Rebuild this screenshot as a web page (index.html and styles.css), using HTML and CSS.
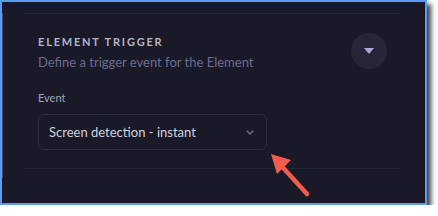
FILE: index.html
```html
<!DOCTYPE html>
<html>
    <head>
        <meta http-equiv='Content-Type' content='text/html; charset=UTF-8'>
        <title>Element Trigger</title>
        <link rel="stylesheet" href="styles.css">
    </head>
    <body>
        <div class='frame'>
            <div class='section'>
                <div class='header'>
                    <div class='heading'>
                        <div class='title'>ELEMENT TRIGGER</div>
                        <div class='subtitle'>Define a trigger event for the Element</div>
                    </div>
                    <button class='toggle'>
                        <svg width='10' height='6' viewBox='0 0 10 6'><polygon points='0,0 10,0 5,6' fill='#aaaad4'/></svg>
                    </button>
                </div>
                <div class='label'>Event</div>
                <div class='select'>
                    <span>Screen detection - instant</span>
                    <svg width='8' height='5' viewBox='0 0 8 5'><polyline points='1,1 4,4 7,1' fill='none' stroke='#6c6c8c' stroke-width='1.4' stroke-linecap='round'/></svg>
                </div>
            </div>
            <svg class='arrow' width='60' height='60' viewBox='0 0 60 60'>
                <line x1='41' y1='46' x2='11' y2='13' stroke='#f25c4c' stroke-width='4.5' stroke-linecap='round'/>
                <polygon points='5,6 25,12 11,26' fill='#f25c4c'/>
            </svg>
        </div>
    </body>
</html>
```

FILE: styles.css
```css
body {
    margin: 0;
    background: #ffffff;
    font-family: Lato, "Noto Sans", sans-serif;
}
.frame {
    position: relative;
    width: 423px;
    height: 201px;
    background: #191927;
    border: 2px solid #5b9bf2;
    box-shadow: 4px 4px 5px rgba(0, 0, 0, 0.75);
}
.frame::before {
    content: '';
    position: absolute;
    left: 0;
    top: 11px;
    width: 1px;
    height: 165px;
    background: #4b4b60;
}
.section {
    margin: 11px 0 0 21px;
    width: 378px;
    border-top: 1px solid #242433;
    border-bottom: 1px solid #242433;
    padding: 19px 14px 18px 15px;
    box-sizing: border-box;
}
.header {
    display: flex;
    justify-content: space-between;
    align-items: flex-start;
}
.heading {
    margin-top: 2px;
}
.title {
    font-size: 11px;
    line-height: 14px;
    font-weight: bold;
    letter-spacing: 1.8px;
    color: #b4b4c6;
}
.subtitle {
    margin-top: 4px;
    font-size: 13px;
    line-height: 18px;
    color: #6c6c8e;
}
.toggle {
    width: 36px;
    height: 36px;
    border: none;
    border-radius: 50%;
    background: #262638;
    padding: 0;
    display: flex;
    align-items: center;
    justify-content: center;
}
.label {
    margin-top: 20px;
    font-size: 11px;
    line-height: 14px;
    color: #a4a4b6;
}
.select {
    margin-top: 9px;
    width: 229px;
    height: 36px;
    box-sizing: border-box;
    border: 1px solid #2b2b3d;
    border-radius: 6px;
    padding: 0 12px 0 10px;
    display: flex;
    align-items: center;
    justify-content: space-between;
    font-size: 13px;
    line-height: 18px;
    color: #d2d2de;
}
.arrow {
    position: absolute;
    left: 264px;
    top: 146px;
}
```
